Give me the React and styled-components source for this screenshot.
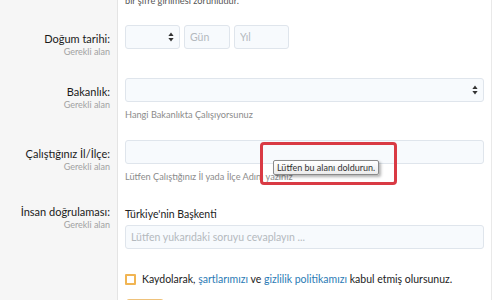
import styled, { createGlobalStyle } from "styled-components";

const GlobalStyle = createGlobalStyle`
  html, body {
    margin: 0;
    padding: 0;
    background: #ffffff;
    overflow: hidden;
  }
  body {
    font-family: Lato, "Open Sans", sans-serif;
    color: #222;
  }
`;

export default function App() {
  return (
    <>
      <GlobalStyle />
      <Page>
        <Row $pt={0} $pb={8}>
          <LabelCell />
          <Content>
            <TopHint>bir şifre girilmesi zorunludur.</TopHint>
          </Content>
        </Row>

        <Row $pt={10} $pb={19}>
          <LabelCell>
            <Label>Doğum tarihi:</Label>
            <Required>Gerekli alan</Required>
          </LabelCell>
          <Content>
            <DateGroup>
              <Select $w={55}>
                <Arrows />
              </Select>
              <Input $w={46} placeholder="Gün" />
              <Input $w={55} placeholder="Yıl" />
            </DateGroup>
          </Content>
        </Row>

        <Row $pt={10} $pb={9}>
          <LabelCell>
            <Label>Bakanlık:</Label>
            <Required>Gerekli alan</Required>
          </LabelCell>
          <Content>
            <Select>
              <Arrows />
            </Select>
            <Hint>Hangi Bakanlıkta Çalışıyorsunuz</Hint>
          </Content>
        </Row>

        <Row $pt={10} $pb={10}>
          <LabelCell>
            <Label>Çalıştığınız İl/İlçe:</Label>
            <Required>Gerekli alan</Required>
          </LabelCell>
          <Content>
            <Input />
            <Hint>Lütfen Çalıştığınız İl yada İlçe Adını yazınız</Hint>
            <Highlight>
              <Tooltip>Lütfen bu alanı doldurun.</Tooltip>
            </Highlight>
          </Content>
        </Row>

        <Row $pt={10} $pb={19} $lt={1}>
          <LabelCell>
            <Label>İnsan doğrulaması:</Label>
            <Required>Gerekli alan</Required>
          </LabelCell>
          <Content>
            <Question>Türkiye'nin Başkenti</Question>
            <Input placeholder="Lütfen yukarıdaki soruyu cevaplayın ..." />
          </Content>
        </Row>

        <Row $pt={3} $pb={12}>
          <LabelCell />
          <Content>
            <Agree>
              <Box />
              <span>
                Kaydolarak, <Link>şartlarımızı</Link> ve{" "}
                <Link>gizlilik politikamızı</Link> kabul etmiş olursunuz.
              </span>
            </Agree>
          </Content>
        </Row>

        <Row $pt={0} $pb={0}>
          <LabelCell />
          <Content>
            <Submit />
          </Content>
        </Row>
      </Page>
    </>
  );
}

function Arrows() {
  return (
    <ArrowIcon width="6" height="10" viewBox="0 0 6 10">
      <path d="M3 0.5 L5.6 4 L0.4 4 Z" fill="#333" />
      <path d="M3 9.5 L5.6 6 L0.4 6 Z" fill="#333" />
    </ArrowIcon>
  );
}

const Page = styled.div`
  width: 491px;
  height: 305px;
  margin-top: -5px;
  border-right: 1px solid #e9e9e9;
  display: flex;
  flex-direction: column;
`;

const Row = styled.div`
  display: flex;
  align-items: stretch;
  flex-shrink: 0;

  &:last-child {
    flex: 1;
  }
  & > div:first-child {
    padding-top: ${p => p.$pt + (p.$lt ? 0.5 : 5.5)}px;
  }
  & > div:last-child {
    padding-top: ${p => p.$pt}px;
    padding-bottom: ${p => p.$pb}px;
  }
`;

const LabelCell = styled.div`
  width: 110px;
  flex-shrink: 0;
  padding-right: 7px;
  background: #f6f6f6;
  border-right: 1px solid #e4e4e4;
  text-align: right;
`;

const Label = styled.div`
  font-size: 11px;
  line-height: 15px;
  color: #1a1a1a;
  white-space: nowrap;
`;

const Required = styled.div`
  font-size: 9px;
  line-height: 12px;
  color: #a2a2a2;
`;

const Content = styled.div`
  position: relative;
  flex: 1;
  padding-left: 7px;
  padding-right: 7px;
`;

const TopHint = styled.div`
  font-size: 9.2px;
  line-height: 12px;
  color: #555;
`;

const DateGroup = styled.div`
  display: flex;
  gap: 4px;
`;

const Select = styled.div`
  box-sizing: border-box;
  width: ${p => (p.$w ? `${p.$w}px` : "100%")};
  height: 24px;
  background: #f7fafd;
  border: 1px solid #dfe5ec;
  border-radius: 3px;
  display: flex;
  align-items: center;
  justify-content: flex-end;
  padding-right: 5px;
`;

const ArrowIcon = styled.svg`
  display: block;
`;

const Input = styled.input`
  box-sizing: border-box;
  display: block;
  width: ${p => (p.$w ? `${p.$w}px` : "100%")};
  height: 24px;
  margin: 0;
  padding: 0 5px;
  background: #f7fafd;
  border: 1px solid #dfe5ec;
  border-radius: 3px;
  font-family: inherit;
  font-size: 10.5px;
  outline: none;

  &::placeholder {
    color: #b4b9be;
  }
`;

const Hint = styled.div`
  margin-top: 7px;
  font-size: 9.2px;
  line-height: 12px;
  color: #8c8c8c;
`;

const Question = styled.div`
  margin-top: 3px;
  margin-bottom: 3px;
  font-size: 10.5px;
  line-height: 16px;
  color: #222;
`;

const Agree = styled.div`
  display: flex;
  align-items: center;
  gap: 6px;
  font-size: 10.5px;
  line-height: 16px;
  color: #222;
  white-space: nowrap;
`;

const Box = styled.span`
  box-sizing: border-box;
  width: 11px;
  height: 11px;
  flex-shrink: 0;
  border: 2px solid #f1b553;
  border-radius: 1px;
  background: #fff;
`;

const Link = styled.span`
  color: #2b7bb5;
`;

const Submit = styled.div`
  width: 36px;
  height: 20px;
  margin-left: 1px;
  background: #fbd99e;
  border: 1px solid #efc27a;
  border-radius: 3px;
`;

const Highlight = styled.div`
  position: absolute;
  left: 142px;
  top: 12px;
  width: 131px;
  height: 37px;
  border: 3px solid #d93a44;
  border-radius: 4px;
`;

const Tooltip = styled.div`
  position: absolute;
  left: 10px;
  top: 15px;
  padding: 1px 3px;
  white-space: nowrap;
  font-size: 9px;
  line-height: 11px;
  color: #333;
  background: linear-gradient(#ffffff, #ececec);
  border: 1px solid #8a8a8a;
  border-radius: 2px;
  box-shadow: 2px 2px 3px rgba(0, 0, 0, 0.3);
`;
